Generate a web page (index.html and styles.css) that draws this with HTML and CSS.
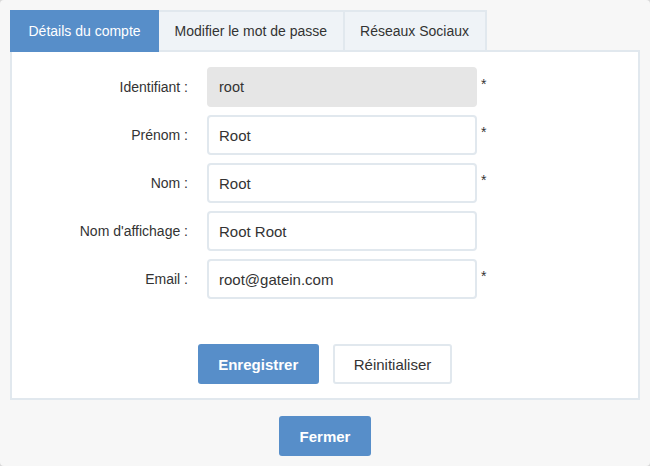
FILE: index.html
```html
<!DOCTYPE html>
<html lang="fr">
<head>
<meta charset="utf-8">
<title>Compte</title>
<link rel="stylesheet" href="styles.css">
</head>
<body>
<div class="popup">
  <div class="tabs">
    <div class="tab active">Détails du compte</div>
    <div class="tab">Modifier le mot de passe</div>
    <div class="tab">Réseaux Sociaux</div>
  </div>
  <div class="panel">
    <form class="form">
      <label class="label">Identifiant :</label>
      <input class="input disabled" type="text" value="root" disabled>
      <span class="req">*</span>

      <label class="label">Prénom :</label>
      <input class="input" type="text" value="Root">
      <span class="req">*</span>

      <label class="label">Nom :</label>
      <input class="input" type="text" value="Root">
      <span class="req">*</span>

      <label class="label">Nom d'affichage :</label>
      <input class="input" type="text" value="Root Root">
      <span class="req"></span>

      <label class="label">Email :</label>
      <input class="input" type="text" value="root@gatein.com">
      <span class="req">*</span>
    </form>
    <div class="actions">
      <button class="btn primary" type="button">Enregistrer</button>
      <button class="btn secondary" type="button">Réinitialiser</button>
    </div>
  </div>
  <div class="footer">
    <button class="btn primary" type="button">Fermer</button>
  </div>
</div>
</body>
</html>
```

FILE: styles.css
```css
html, body {
  margin: 0;
  padding: 0;
  background: #d8d8d8;
}
body {
  font-family: "Liberation Sans", Arial, sans-serif;
  color: #333;
}
.popup {
  box-sizing: border-box;
  width: 650px;
  height: 466px;
  background: #f7f7f7;
  border-radius: 4px;
  padding: 10px 10px 0 10px;
}
.tabs {
  display: flex;
  height: 40px;
}
.tab {
  box-sizing: border-box;
  height: 40px;
  padding: 0 15.5px;
  border: 2px solid #e1e8ee;
  border-bottom: none;
  margin-left: -2px;
  background: #eff3f7;
  font-size: 14px;
  line-height: 38px;
  color: #333;
  white-space: nowrap;
}
.tab:first-child {
  margin-left: 0;
}
.tab.active {
  background: #578ec9;
  border-color: #578ec9;
  color: #fff;
  height: 42px;
  position: relative;
  z-index: 1;
  padding: 0 16.5px;
}
.panel {
  box-sizing: border-box;
  height: 350px;
  background: #fff;
  border: 2px solid #e1e8ee;
  padding-top: 15px;
}
.form {
  display: grid;
  grid-template-columns: 176px 270px auto;
  column-gap: 19px;
  row-gap: 8px;
  margin: 0;
}
.label {
  text-align: right;
  font-size: 14px;
  line-height: 40px;
  white-space: nowrap;
}
.input {
  box-sizing: border-box;
  width: 270px;
  height: 40px;
  margin: 0;
  border: 2px solid #e1e8ee;
  border-radius: 4px;
  background: #fff;
  padding: 0 10px;
  font-family: "Liberation Sans", Arial, sans-serif;
  font-size: 15px;
  color: #333;
  outline: none;
}
.input.disabled {
  background: #e6e6e6;
  border-color: #e6e6e6;
  color: #333;
  font-size: 14.5px;
}
.req {
  margin-left: -15px;
  font-size: 14px;
  line-height: 34px;
  color: #333;
}
.actions {
  display: flex;
  justify-content: center;
  gap: 14px;
  margin-top: 45px;
}
.btn {
  box-sizing: border-box;
  height: 40px;
  padding: 0 20px;
  border-radius: 3px;
  font-family: "Liberation Sans", Arial, sans-serif;
  font-size: 15px;
  cursor: pointer;
}
.btn.primary {
  background: #578ec9;
  border: none;
  color: #fff;
  font-weight: bold;
  padding: 0 20.5px;
}
.btn.secondary {
  background: #fff;
  border: 2px solid #e1e8ee;
  color: #333;
  padding: 0 19px;
}
.footer {
  display: flex;
  justify-content: center;
  margin-top: 16px;
}
```
